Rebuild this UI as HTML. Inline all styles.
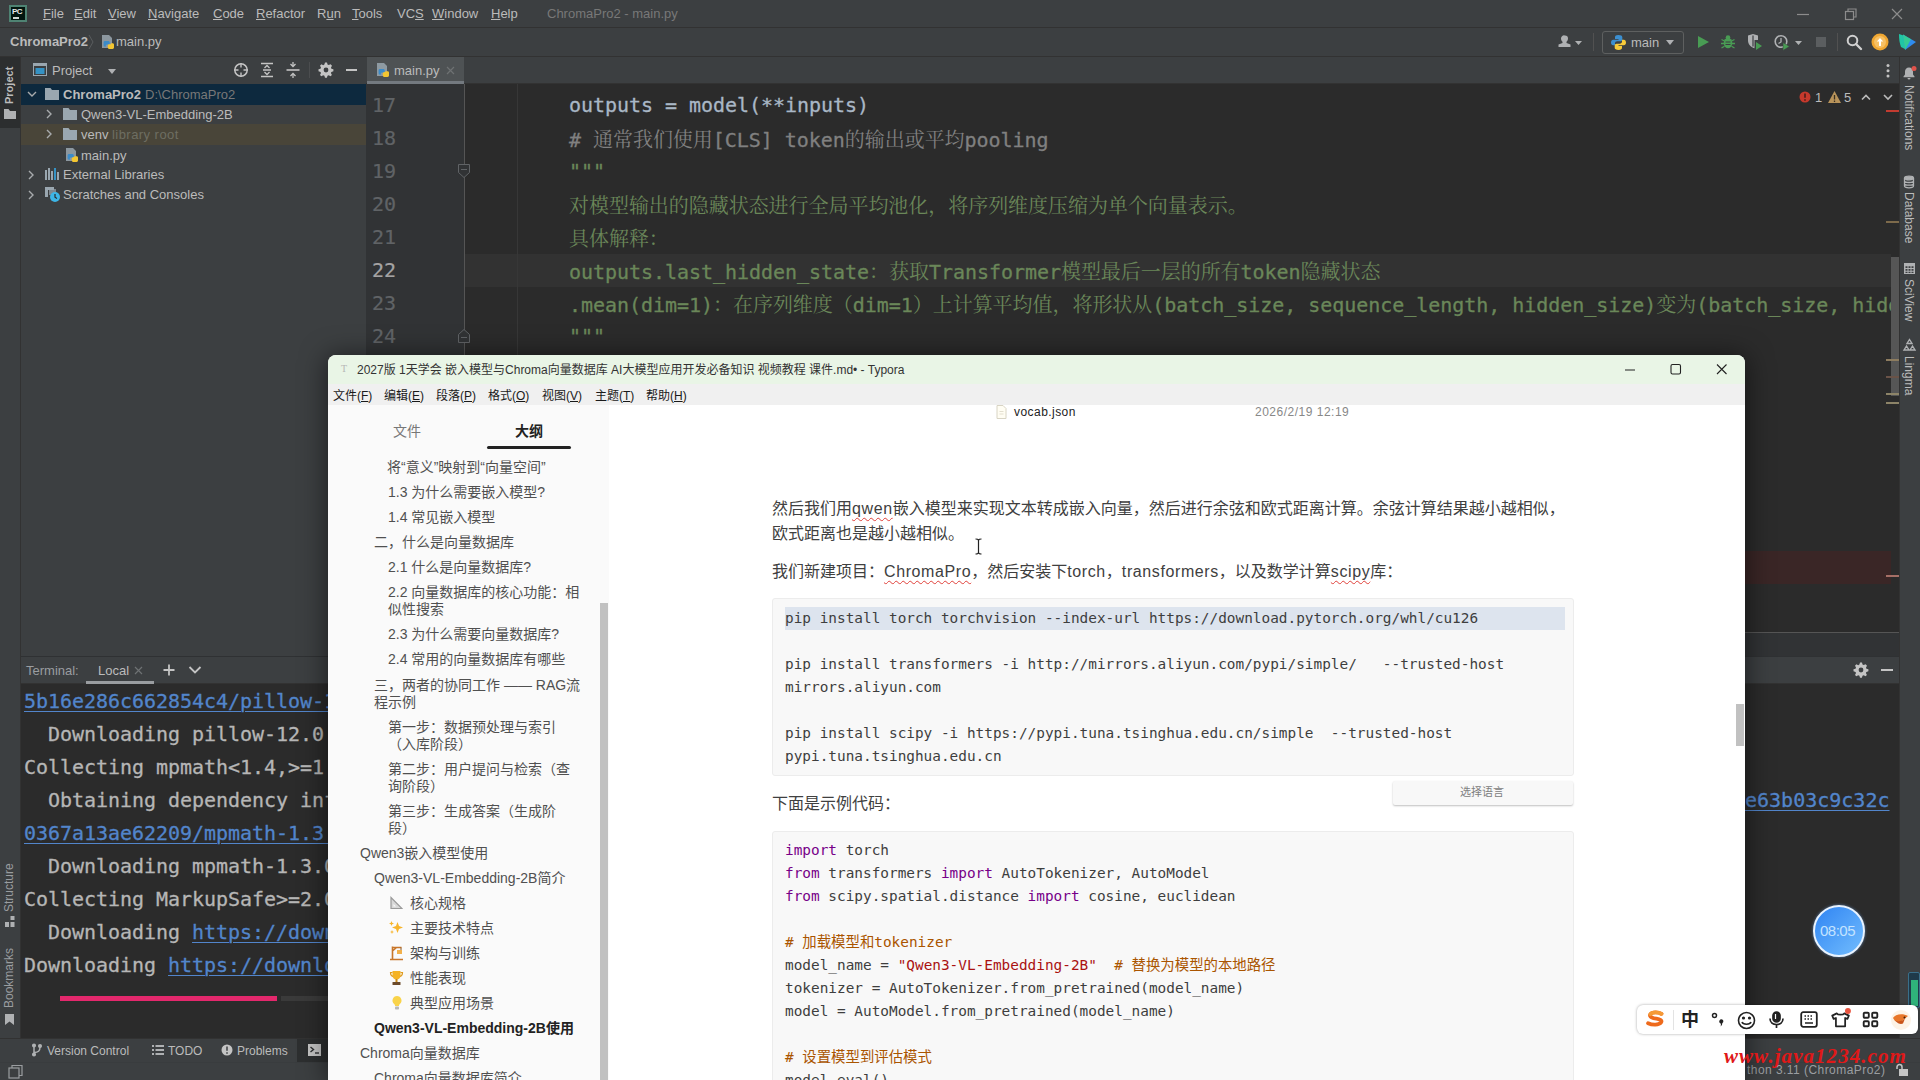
<!DOCTYPE html>
<html lang="zh-CN">
<head>
<meta charset="utf-8">
<title>ChromaPro2 - main.py</title>
<style>
*{box-sizing:border-box;margin:0;padding:0}
html,body{width:1920px;height:1080px;overflow:hidden;background:#2b2b2b}
body{position:relative;font-family:"Liberation Sans","Noto Sans CJK SC",sans-serif;font-size:13px;color:#bbbbbb}
.abs{position:absolute}
.t{position:absolute;white-space:nowrap;line-height:1}
.mono{font-family:"DejaVu Sans Mono","Liberation Mono","Noto Sans CJK SC",monospace}
/* ---------- IDE ---------- */
#menubar{left:0;top:0;width:1920px;height:28px;background:#3c3f41;border-bottom:1px solid #323232}
#navbar{left:0;top:28px;width:1920px;height:29px;background:#3c3f41;border-bottom:1px solid #323232}
.mi{top:7px;font-size:13px;color:#bbbbbb}
#menubar u{text-decoration-thickness:1px;text-underline-offset:1px}
#lstripe{left:0;top:57px;width:21px;height:1005px;background:#3c3f41;border-right:1px solid #323232}
#rstripe{left:1899px;top:57px;width:21px;height:1005px;background:#3c3f41;border-left:1px solid #323232}
#projhead{left:21px;top:57px;width:345px;height:27px;background:#3c3f41}
#proj{left:21px;top:84px;width:345px;height:573px;background:#3c3f41}
#tabbar{left:366px;top:57px;width:1533px;height:27px;background:#3c3f41;border-bottom:1px solid #323232}
#gutter{left:366px;top:84px;width:99px;height:548px;background:#313335;border-right:1px solid #555555}
#editor{left:465px;top:84px;width:1434px;height:548px;background:#2b2b2b}
.ln{-webkit-text-stroke:.2px currentColor;position:absolute;left:372px;font-size:20px;color:#606366;line-height:33px;height:33px}
.cl{letter-spacing:-.04px;-webkit-text-stroke:.3px currentColor;position:absolute;left:569px;font-size:20px;line-height:33px;height:33px;white-space:pre;color:#a9b7c6}
.cl .s{-webkit-text-stroke:0;font-family:"Noto Serif CJK SC","Noto Sans CJK SC",serif;font-size:20px}
.rs{left:1915px;font-size:12px;color:#bbbbbb;transform:rotate(90deg);transform-origin:0 0}
.g{color:#6a8759}
.cm{color:#808080}
/* bottom */
#splitbar{left:366px;top:632px;width:1533px;height:25px;background:#313335;border-top:1px solid #555555}
#termhead{left:21px;top:656px;width:1878px;height:28px;background:#3c3f41;border-top:1px solid #2f3133;border-bottom:1px solid #323232}
#term{left:21px;top:684px;width:1878px;height:354px;background:#2b2b2b}
.tl{letter-spacing:-.04px;-webkit-text-stroke:.3px currentColor;position:absolute;left:24px;font-size:20px;line-height:33px;height:33px;white-space:pre;color:#b6b6b6}
.lk{color:#5285cb;text-decoration:underline;text-decoration-thickness:1px;text-underline-offset:3px}
#botbar{left:0;top:1038px;width:1920px;height:24px;background:#3c3f41;border-top:1px solid #323232}
#status{left:0;top:1062px;width:1920px;height:18px;background:#3c3f41;border-top:1px solid #393c3e}
/* ---------- Typora ---------- */
#typ{left:328px;top:355px;width:1417px;height:725px;background:#ffffff;border-radius:8px 8px 0 0;overflow:hidden;color:#333;box-shadow:0 2px 26px 2px rgba(0,0,0,.5)}
#ttitle{left:0;top:0;width:1417px;height:29px;background:#e9f5e6}
#tmenu{left:0;top:29px;width:1417px;height:21px;background:#f0f0f0}
#tside{left:0;top:50px;width:281px;height:675px;background:#fafafa}
.tm{font-size:12px;color:#1a1a1a}
.ol{position:absolute;font-size:14px;line-height:17px;color:#505050;white-space:nowrap}
.p{position:absolute;left:444px;font-size:16px;line-height:25px;color:#404040;white-space:nowrap}
.cb{position:absolute;left:444px;width:802px;background:#f8f8f8;border:1px solid #ececec;border-radius:3px}
.cd{position:absolute;left:457px;font-size:14.4px;line-height:23px;height:23px;white-space:pre;color:#3e3e3e}
.la{letter-spacing:.6px}
.k{color:#770088}.c{color:#aa5500}.st{color:#aa1111}
</style>
</head>
<body>
<!-- IDE chrome -->
<div id="menubar" class="abs"></div>
<div id="navbar" class="abs"></div>
<div id="lstripe" class="abs"></div>
<div id="rstripe" class="abs"></div>
<div id="projhead" class="abs"></div>
<div id="proj" class="abs"></div>
<div id="tabbar" class="abs"></div>
<div id="gutter" class="abs"></div>
<div id="editor" class="abs"></div>
<div id="splitbar" class="abs"></div>
<div id="termhead" class="abs"></div>
<div id="term" class="abs"></div>
<div id="botbar" class="abs"></div>
<div id="status" class="abs"></div>

<!-- menu bar -->
<div class="abs" style="left:9px;top:5px;width:18px;height:17px;background:#02150f;border:2px solid #4f8373"><span class="t" style="left:1px;top:1px;font-size:8px;font-weight:bold;color:#e8e8e8;letter-spacing:-.5px">PC</span><span class="abs" style="left:2px;top:10px;width:6px;height:1.5px;background:#cfd8d4"></span></div>
<div id="menus" class="abs" style="left:0;top:0;width:1920px;height:28px">
<span class="t mi" style="left:43px"><u>F</u>ile</span>
<span class="t mi" style="left:74px"><u>E</u>dit</span>
<span class="t mi" style="left:108px"><u>V</u>iew</span>
<span class="t mi" style="left:148px"><u>N</u>avigate</span>
<span class="t mi" style="left:213px"><u>C</u>ode</span>
<span class="t mi" style="left:256px"><u>R</u>efactor</span>
<span class="t mi" style="left:317px">R<u>u</u>n</span>
<span class="t mi" style="left:352px"><u>T</u>ools</span>
<span class="t mi" style="left:397px">VC<u>S</u></span>
<span class="t mi" style="left:432px"><u>W</u>indow</span>
<span class="t mi" style="left:491px"><u>H</u>elp</span>
<span class="t mi" style="left:547px;color:#787878">ChromaPro2 - main.py</span>
</div>
<!-- window controls -->
<svg class="abs" style="left:1780px;top:0" width="140" height="28" viewBox="0 0 140 28" fill="none" stroke="#8c8c8c" stroke-width="1.2"><path d="M17 14.5h12"/><rect x="65.5" y="11.5" width="8" height="8"/><path d="M68 11.5v-2.5h8v8h-2.5"/><path d="M112 9l10 10M122 9l-10 10"/></svg>
<!-- nav bar -->
<span class="t" style="left:10px;top:35px;font-size:13px;font-weight:bold;color:#bbbbbb">ChromaPro2</span>
<svg class="abs" style="left:87px;top:34px" width="8" height="16" viewBox="0 0 8 16" fill="none" stroke="#5a5d5f" stroke-width="1"><path d="M2 1l4 7-4 7"/></svg>
<svg class="abs pyf" style="left:99px;top:34px" width="16" height="16" viewBox="0 0 16 16"><path d="M3 1h7l3 3v10H3z" fill="#9aa7b0" opacity=".85"/><path d="M7.2 7.5h3.2a1.4 1.4 0 0 1 1.4 1.4v1.6H8.6v.6h4.4" fill="none" stroke="#3e86c6" stroke-width="0"/><path d="M6 7h3.3c.8 0 1.4.6 1.4 1.4v2H8.2c-.8 0-1.4.6-1.4 1.4v.9H6c-.8 0-1.4-.6-1.4-1.4V8.400c0-.8.600-1.400 1.400-1.400z" fill="#3b8bc9"/><path d="M12 9.300h1.600c.8 0 1.400.6 1.400 1.400v2.900c0 .8-.6 1.400-1.400 1.400h-3.400c-.8 0-1.400-.6-1.400-1.400v-2c0-.8.600-1.400 1.400-1.400H12z" fill="#f4c631"/></svg>
<span class="t" style="left:116px;top:35px;font-size:13px;color:#bbbbbb">main.py</span>
<!-- right toolbar -->
<svg class="abs" style="left:1556px;top:33px" width="30" height="18" viewBox="0 0 30 18"><path d="M9 2.500a3 3 0 0 1 3 3c0 1.500-.8 2.600-1.500 3.200v1.300l4 1.500v2.500H2.500v-2.500l4-1.500v-1.300C5.800 8.100 5 7 5 5.500a3 3 0 0 1 4-3z" fill="#afb1b3"/><path d="M19 8h7l-3.500 4z" fill="#afb1b3"/></svg>
<div class="abs" style="left:1593px;top:33px;width:1px;height:18px;background:#515151"></div>
<div class="abs" style="left:1602px;top:31px;width:82px;height:23px;border:1px solid #5e6060;border-radius:3px"></div>
<svg class="abs" style="left:1610px;top:34px" width="17" height="17" viewBox="0 0 17 17"><path d="M8.300 1c-2.200 0-3.300.9-3.300 2.200V5h3.500v.7H3.200C1.900 5.700 1 6.800 1 8.500s.9 2.800 2.200 2.800H5V9.400c0-1.300 1-2.200 2.200-2.200h3.300c1 0 1.800-.8 1.800-1.800V3.200C12.300 1.900 11 1 8.300 1z" fill="#3c8fd0"/><path d="M8.700 16c2.200 0 3.300-.9 3.300-2.200V12H8.500v-.7h5.300c1.300 0 2.200-1.100 2.200-2.800s-.9-2.800-2.200-2.800H12v1.900c0 1.300-1 2.200-2.200 2.200H6.500c-1 0-1.800.8-1.800 1.800v2.200C4.700 15.100 6 16 8.700 16z" fill="#f7cb3a"/></svg>
<span class="t" style="left:1631px;top:36px;font-size:13px;color:#bbbbbb">main</span>
<svg class="abs" style="left:1665px;top:39px" width="10" height="7" viewBox="0 0 10 7"><path d="M1 1h8l-4 5z" fill="#afb1b3"/></svg>
<svg class="abs" style="left:1695px;top:33px" width="16" height="18" viewBox="0 0 16 18"><path d="M3 3l11 6-11 6z" fill="#499c54"/></svg>
<svg class="abs" style="left:1719px;top:33px" width="18" height="18" viewBox="0 0 18 18"><ellipse cx="9" cy="10" rx="4.300" ry="5.200" fill="#499c54"/><circle cx="9" cy="4.600" r="2.300" fill="#499c54"/><path d="M2.500 6.500l3 1.500M15.500 6.500l-3 1.500M2 10.500h3M16 10.500h-3M2.500 15l3-1.800M15.500 15l-3-1.800" stroke="#499c54" stroke-width="1.300" fill="none"/><path d="M6.500 9h5M6.500 11.500h5" stroke="#3c3f41" stroke-width="1"/></svg>
<svg class="abs" style="left:1745px;top:33px" width="18" height="18" viewBox="0 0 18 18"><path d="M3 2.500l5-1.500 5 1.500v4.500H9.500v8.300C5.500 14 3 11 3 7.500z" fill="#afb1b3"/><path d="M8 2.500v11" stroke="#3c3f41" stroke-width="1.200"/><path d="M11 9l6 4-6 4z" fill="#499c54"/></svg>
<svg class="abs" style="left:1772px;top:33px" width="34" height="18" viewBox="0 0 34 18"><circle cx="9" cy="8.500" r="5.800" fill="none" stroke="#afb1b3" stroke-width="1.600"/><path d="M9 5v4l-2.500 1.500" stroke="#afb1b3" stroke-width="1.300" fill="none"/><path d="M11 9.500l6.500 4-6.500 4z" fill="#499c54" stroke="#3c3f41" stroke-width=".6"/><path d="M23 8h7l-3.500 4z" fill="#afb1b3"/></svg>
<div class="abs" style="left:1816px;top:37px;width:10px;height:10px;background:#5b5e60"></div>
<div class="abs" style="left:1837px;top:33px;width:1px;height:18px;background:#515151"></div>
<svg class="abs" style="left:1845px;top:33px" width="18" height="18" viewBox="0 0 18 18" fill="none" stroke="#d0d0d0"><circle cx="7.500" cy="7.500" r="4.800" stroke-width="2"/><path d="M11 11l5 5" stroke-width="2.400" stroke-linecap="round"/></svg>
<svg class="abs" style="left:1871px;top:33px" width="18" height="18" viewBox="0 0 18 18"><circle cx="9" cy="9" r="8.500" fill="#f0a732"/><circle cx="9" cy="9" r="6" fill="#f7c063"/><path d="M9 5l3.200 3.500H10V13H8V8.500H5.800z" fill="#fff"/></svg>
<svg class="abs" style="left:1896px;top:32px" width="22" height="20" viewBox="0 0 22 20"><path d="M3 2l6 2v13l-4-2c-1.500-4-2-8-2-13z" fill="#20c6a5"/><path d="M7 2.500l13 7.500-11 8z" fill="#2f8cf0"/><path d="M7 2.500l8 4.700-6 10.800z" fill="#36d28b" opacity=".9"/></svg>


<!-- left stripe -->
<div class="abs" style="left:0;top:57px;width:20px;height:71px;background:#2c2e2f"></div>
<span class="t" style="left:4px;top:104px;font-size:11px;font-weight:bold;color:#bbbbbb;transform:rotate(-90deg);transform-origin:0 0">Project</span>
<svg class="abs" style="left:3px;top:108px" width="14" height="12" viewBox="0 0 14 12"><path d="M1 1h4.500l1.500 2h6v8H1z" fill="#afb1b3"/></svg>
<!-- project header -->
<svg class="abs" style="left:33px;top:63px" width="14" height="14" viewBox="0 0 14 14"><rect x=".5" y=".5" width="13" height="12" fill="#3c3f41" stroke="#9aa7b0"/><rect x="0" y="0" width="14" height="3" fill="#9aa7b0"/><rect x="2.500" y="5" width="9" height="6" fill="#3592c4"/></svg>
<span class="t" style="left:52px;top:64px;font-size:13px;color:#bbbbbb">Project</span>
<svg class="abs" style="left:107px;top:68px" width="10" height="7" viewBox="0 0 10 7"><path d="M1 1h8l-4 5z" fill="#afb1b3"/></svg>
<svg class="abs" style="left:233px;top:62px" width="16" height="16" viewBox="0 0 16 16" fill="none" stroke="#c4c4c4" stroke-width="1.500"><circle cx="8" cy="8" r="6.200"/><path d="M8 1v4.500M8 10.500V15M1 8h4.500M10.500 8H15" stroke-width="1.400"/></svg>
<svg class="abs" style="left:259px;top:62px" width="16" height="16" viewBox="0 0 16 16" fill="none" stroke="#c4c4c4" stroke-width="1.600"><path d="M2 1.500h12M2 14.500h12M4 8h8"/><path d="M5.500 6L8 3.500 10.500 6M5.500 10L8 12.500l2.500-2.500" stroke-width="1.300"/></svg>
<svg class="abs" style="left:285px;top:62px" width="16" height="16" viewBox="0 0 16 16" fill="none" stroke="#c4c4c4" stroke-width="1.600"><path d="M1.500 8h13"/><path d="M5.500 2L8 4.500 10.500 2M5.500 14L8 11.500l2.500 2.500" stroke-width="1.300"/><path d="M8 0v4M8 12v4" stroke-width="1.300"/></svg>
<div class="abs" style="left:309px;top:62px;width:1px;height:16px;background:#4b4d4f"></div>
<svg class="abs" style="left:318px;top:62px" width="16" height="16" viewBox="0 0 16 16"><path d="M8 1.200l1 .1.500 2 1.200.6 1.900-.9 1.400 1.500-1 1.800.4 1.200 2 .6v2l-2 .6-.5 1.200 1 1.800-1.400 1.400-1.800-1-1.200.5-.6 2H7l-.6-2-1.200-.5-1.800 1-1.400-1.400 1-1.800-.5-1.200-2-.6v-2l2-.6.500-1.200-1-1.800L3.400 3l1.800 1 1.200-.6.600-2z" fill="#c4c4c4" transform="translate(0,-.8)"/><circle cx="8" cy="8" r="2.400" fill="#3c3f41"/></svg>
<div class="abs" style="left:346px;top:69px;width:11px;height:2px;background:#c4c4c4"></div>
<!-- tree -->
<div class="abs" style="left:21px;top:84px;width:345px;height:21px;background:#0d293e"></div>
<div class="abs" style="left:21px;top:124px;width:345px;height:21px;background:#494539"></div>
<svg class="abs" style="left:27px;top:90px" width="10" height="8" viewBox="0 0 10 8" fill="none" stroke="#a8abad" stroke-width="1.400"><path d="M1 2l4 4 4-4"/></svg>
<svg class="abs" style="left:45px;top:88px" width="14" height="12" viewBox="0 0 14 12"><path d="M0 0h5.500l1.500 2h7v10H0z" fill="#9aa7b0"/></svg>
<span class="t" style="left:63px;top:88px;font-size:13px;font-weight:bold;color:#bbbbbb">ChromaPro2</span>
<span class="t" style="left:145px;top:88px;font-size:13px;color:#787878">D:\ChromaPro2</span>
<svg class="abs" style="left:45px;top:109px" width="8" height="10" viewBox="0 0 8 10" fill="none" stroke="#a8abad" stroke-width="1.400"><path d="M2 1l4 4-4 4"/></svg>
<svg class="abs" style="left:63px;top:108px" width="14" height="12" viewBox="0 0 14 12"><path d="M0 0h5.500l1.500 2h7v10H0z" fill="#9aa7b0"/></svg>
<span class="t" style="left:81px;top:108px;font-size:13px;color:#bbbbbb">Qwen3-VL-Embedding-2B</span>
<svg class="abs" style="left:45px;top:129px" width="8" height="10" viewBox="0 0 8 10" fill="none" stroke="#a8abad" stroke-width="1.400"><path d="M2 1l4 4-4 4"/></svg>
<svg class="abs" style="left:63px;top:128px" width="14" height="12" viewBox="0 0 14 12"><path d="M0 0h5.500l1.500 2h7v10H0z" fill="#9aa7b0"/></svg>
<span class="t" style="left:81px;top:128px;font-size:13px;color:#bbbbbb">venv</span>
<span class="t" style="left:112px;top:128px;font-size:13px;color:#6e6e62;letter-spacing:.45px">library root</span>
<svg class="abs" style="left:63px;top:147px" width="16" height="16" viewBox="0 0 16 16"><path d="M3 1h7l3 3v10H3z" fill="#9aa7b0" opacity=".85"/><path d="M6 7h3.300c.8 0 1.400.6 1.400 1.400v2H8.200c-.8 0-1.400.6-1.400 1.400v.9H6c-.8 0-1.400-.6-1.400-1.400V8.400C4.600 7.600 5.200 7 6 7z" fill="#3b8bc9"/><path d="M12 9.300h1.600c.8 0 1.400.6 1.400 1.400v2.900c0 .8-.6 1.400-1.400 1.400h-3.400c-.8 0-1.400-.6-1.400-1.400v-2c0-.8.600-1.400 1.400-1.400z" fill="#f4c631"/></svg>
<span class="t" style="left:81px;top:149px;font-size:13px;color:#bbbbbb">main.py</span>
<svg class="abs" style="left:27px;top:170px" width="8" height="10" viewBox="0 0 8 10" fill="none" stroke="#a8abad" stroke-width="1.400"><path d="M2 1l4 4-4 4"/></svg>
<svg class="abs" style="left:45px;top:168px" width="15" height="13" viewBox="0 0 15 13" fill="#9aa7b0"><rect x="0" y="2" width="2" height="10"/><rect x="3" y="0" width="2" height="12"/><rect x="6" y="3" width="2" height="9"/><rect x="9" y="0" width="2" height="12" fill="#3592c4"/><rect x="12" y="4" width="2" height="8"/></svg>
<span class="t" style="left:63px;top:168px;font-size:13px;color:#bbbbbb">External Libraries</span>
<svg class="abs" style="left:27px;top:190px" width="8" height="10" viewBox="0 0 8 10" fill="none" stroke="#a8abad" stroke-width="1.400"><path d="M2 1l4 4-4 4"/></svg>
<svg class="abs" style="left:44px;top:186px" width="17" height="17" viewBox="0 0 17 17"><path d="M1 1h9v3H4v7H1z" fill="#9aa7b0"/><rect x="5" y="3" width="7" height="6" fill="#9aa7b0" opacity=".7"/><circle cx="11" cy="11" r="5" fill="#3db5e6"/><path d="M11 8v3.200l2 1.200" stroke="#2b2b2b" stroke-width="1.200" fill="none"/></svg>
<span class="t" style="left:63px;top:188px;font-size:13px;color:#bbbbbb">Scratches and Consoles</span>
<!-- editor tab -->
<div class="abs" style="left:367px;top:57px;width:97px;height:27px;background:#4e5254;border-bottom:3px solid #747a80"></div>
<svg class="abs" style="left:374px;top:62px" width="16" height="16" viewBox="0 0 16 16"><path d="M3 1h7l3 3v10H3z" fill="#9aa7b0" opacity=".85"/><path d="M6 7h3.300c.8 0 1.400.6 1.400 1.400v2H8.200c-.8 0-1.400.6-1.400 1.400v.9H6c-.8 0-1.400-.6-1.400-1.400V8.400C4.600 7.600 5.200 7 6 7z" fill="#3b8bc9"/><path d="M12 9.300h1.600c.8 0 1.400.6 1.400 1.400v2.900c0 .8-.6 1.400-1.400 1.400h-3.400c-.8 0-1.400-.6-1.400-1.400v-2c0-.8.600-1.400 1.400-1.400z" fill="#f4c631"/></svg>
<span class="t" style="left:394px;top:64px;font-size:13px;color:#bbbbbb">main.py</span>
<svg class="abs" style="left:446px;top:66px" width="9" height="9" viewBox="0 0 9 9" stroke="#6e7173" stroke-width="1.200"><path d="M1 1l7 7M8 1l-7 7"/></svg>
<svg class="abs" style="left:1885px;top:63px" width="6" height="16" viewBox="0 0 6 16" fill="#c4c4c4"><circle cx="3" cy="2.500" r="1.500"/><circle cx="3" cy="7.700" r="1.500"/><circle cx="3" cy="13" r="1.500"/></svg>

<!-- editor -->
<div class="abs" style="left:465px;top:254px;width:1426px;height:33px;background:#323232"></div>
<div class="abs" style="left:465px;top:551px;width:1426px;height:33px;background:#3a2626"></div>
<div class="abs" style="left:517px;top:84px;width:1px;height:548px;background:#373737"></div>
<div id="edclip" class="abs" style="left:465px;top:84px;width:1426px;height:548px;overflow:hidden">
<div class="cl mono" style="left:104px;top:4.5px">outputs = model(**inputs)</div>
<div class="cl mono" style="left:104px;top:37.5px"><span class="cm"># <span class="s">通常我们使用</span>[CLS] token<span class="s">的输出或平均</span>pooling</span></div>
<div class="cl mono" style="left:104px;top:70.5px"><span class="g">"""</span></div>
<div class="cl mono" style="left:104px;top:103.5px"><span class="g"><span class="s">对模型输出的隐藏状态进行全局平均池化，将序列维度压缩为单个向量表示。</span></span></div>
<div class="cl mono" style="left:104px;top:136.5px"><span class="g"><span class="s">具体解释：</span></span></div>
<div class="cl mono" style="left:104px;top:169.5px"><span class="g">outputs.last_hidden_state<span class="s">：获取</span>Transformer<span class="s">模型最后一层的所有</span>token<span class="s">隐藏状态</span></span></div>
<div class="cl mono" style="left:104px;top:202.5px"><span class="g">.mean(dim=1)<span class="s">：在序列维度（</span>dim=1<span class="s">）上计算平均值，将形状从</span>(batch_size, sequence_length, hidden_size)<span class="s">变为</span>(batch_size, hidden_size)</span></div>
<div class="cl mono" style="left:104px;top:235.5px"><span class="g">"""</span></div>
</div>
<div class="ln mono" style="top:88.5px">17</div>
<div class="ln mono" style="top:121.5px">18</div>
<div class="ln mono" style="top:154.5px">19</div>
<div class="ln mono" style="top:187.5px">20</div>
<div class="ln mono" style="top:220.5px">21</div>
<div class="ln mono" style="top:253.5px;color:#a4a3a3">22</div>
<div class="ln mono" style="top:286.5px">23</div>
<div class="ln mono" style="top:319.5px">24</div>
<svg class="abs" style="left:457px;top:163px" width="14" height="16" viewBox="0 0 14 16"><path d="M1.500 1.500h11v8l-5.500 5-5.500-5z" fill="#313335" stroke="#606366" stroke-width="1"/><path d="M4 6.500h6" stroke="#606366"/></svg>
<svg class="abs" style="left:457px;top:328px" width="14" height="16" viewBox="0 0 14 16"><path d="M1.500 14.500h11v-8l-5.500-5-5.500 5z" fill="#313335" stroke="#606366" stroke-width="1"/><path d="M4 9.500h6" stroke="#606366"/></svg>
<svg class="abs" style="left:1798px;top:90px" width="14" height="14" viewBox="0 0 14 14"><circle cx="7" cy="7" r="5.500" fill="#c7392c"/><path d="M7 3.500v4.300M7 9.300v1.400" stroke="#3a1a18" stroke-width="1.400"/></svg>
<span class="t" style="left:1815px;top:91px;font-size:13px;color:#bbbbbb">1</span>
<svg class="abs" style="left:1827px;top:90px" width="15" height="14" viewBox="0 0 15 14"><path d="M7.500 1l6.500 12H1z" fill="#b8935a"/><path d="M7.500 5v4.500M7.500 10.600v1.400" stroke="#3a3020" stroke-width="1.300"/></svg>
<span class="t" style="left:1844px;top:91px;font-size:13px;color:#bbbbbb">5</span>
<svg class="abs" style="left:1860px;top:92px" width="12" height="10" viewBox="0 0 12 10" fill="none" stroke="#bbbbbb" stroke-width="1.600"><path d="M2 7.500l4-4 4 4"/></svg>
<svg class="abs" style="left:1882px;top:92px" width="12" height="10" viewBox="0 0 12 10" fill="none" stroke="#bbbbbb" stroke-width="1.600"><path d="M2 3l4 4 4-4"/></svg>
<!-- scrollbar + stripe marks -->
<div class="abs" style="left:1891px;top:257px;width:8px;height:139px;background:#565656"></div>
<div class="abs" style="left:1886px;top:110px;width:13px;height:2px;background:#c23b30"></div>
<div class="abs" style="left:1886px;top:221px;width:13px;height:2px;background:#7d6a4b"></div>
<div class="abs" style="left:1886px;top:359px;width:13px;height:2px;background:#8d7c5f"></div>
<div class="abs" style="left:1886px;top:376px;width:13px;height:2px;background:#6a5348"></div>
<div class="abs" style="left:1886px;top:393px;width:13px;height:2px;background:#8d8468"></div>
<div class="abs" style="left:1886px;top:402px;width:13px;height:2px;background:#8d8468"></div>
<div class="abs" style="left:1886px;top:575px;width:13px;height:2px;background:#a56f66"></div>
<!-- right stripe -->
<svg class="abs" style="left:1902px;top:65px" width="16" height="16" viewBox="0 0 16 16"><path d="M7 2.500c2.500 0 4 1.800 4 4v3l1.500 2v.8H1.500v-.8l1.500-2v-3c0-2.200 1.500-4 4-4z" fill="#afb1b3"/><path d="M5.500 13h3a1.500 1.500 0 0 1-3 0z" fill="#afb1b3"/><circle cx="12" cy="3.500" r="2.500" fill="#e0524a"/></svg>
<span class="t rs" style="top:85px">Notifications</span>
<svg class="abs" style="left:1902px;top:175px" width="14" height="14" viewBox="0 0 14 14" fill="none" stroke="#afb1b3" stroke-width="1.300"><ellipse cx="7" cy="3" rx="4.500" ry="1.800" fill="#afb1b3"/><path d="M2.500 3v8c0 1 2 1.800 4.500 1.800s4.500-.8 4.500-1.800V3M2.500 5.700c0 1 2 1.800 4.500 1.800s4.500-.8 4.500-1.800M2.500 8.400c0 1 2 1.800 4.500 1.800s4.500-.8 4.500-1.800"/></svg>
<span class="t rs" style="top:192px">Database</span>
<svg class="abs" style="left:1903px;top:262px" width="13" height="13" viewBox="0 0 13 13" fill="#afb1b3"><path d="M1 1h11v11H1zM2.500 4.200v1.800h2V4.200zM5.500 4.200v1.800h2V4.200zM8.500 4.200v1.800h2V4.200zM2.500 7v1.800h2V7zM5.500 7v1.800h2V7zM8.500 7v1.800h2V7zM2.500 9.700v1.300h2V9.700zM5.500 9.700v1.300h2V9.700zM8.500 9.700v1.300h2V9.700z" fill-rule="evenodd"/></svg>
<span class="t rs" style="top:279px">SciView</span>
<svg class="abs" style="left:1902px;top:338px" width="15" height="15" viewBox="0 0 15 15" fill="none" stroke="#afb1b3" stroke-width="1.400"><path d="M7.500 1.500l2.500 4-5 0zM2 12l2.500-4 2.500 4zM8 12l2.500-4 2.500 4z"/></svg>
<span class="t rs" style="top:356px">Lingma</span>

<!-- terminal -->
<span class="t" style="left:26px;top:664px;font-size:13px;color:#9a9da0">Terminal:</span>
<span class="t" style="left:98px;top:664px;font-size:13px;color:#bbbbbb">Local</span>
<svg class="abs" style="left:134px;top:666px" width="9" height="9" viewBox="0 0 9 9" stroke="#6e7173" stroke-width="1.200"><path d="M1 1l7 7M8 1l-7 7"/></svg>
<div class="abs" style="left:86px;top:681px;width:68px;height:3px;background:#9a9da0"></div>
<svg class="abs" style="left:162px;top:663px" width="14" height="14" viewBox="0 0 14 14" stroke="#c4c4c4" stroke-width="1.800"><path d="M7 1.500v11M1.500 7h11"/></svg>
<svg class="abs" style="left:188px;top:665px" width="14" height="10" viewBox="0 0 14 10" fill="none" stroke="#c4c4c4" stroke-width="1.800"><path d="M1.500 2l5.500 5.500L12.500 2"/></svg>
<svg class="abs" style="left:1853px;top:662px" width="16" height="16" viewBox="0 0 16 16"><path d="M8 1.200l1 .1.500 2 1.200.6 1.900-.9 1.400 1.500-1 1.800.4 1.200 2 .6v2l-2 .6-.5 1.200 1 1.800-1.400 1.400-1.800-1-1.200.5-.6 2H7l-.6-2-1.200-.5-1.800 1-1.400-1.400 1-1.800-.5-1.200-2-.6v-2l2-.6.500-1.200-1-1.800L3.400 3l1.800 1 1.200-.6.600-2z" fill="#c4c4c4" transform="translate(0,-.8)"/><circle cx="8" cy="8" r="2.400" fill="#3c3f41"/></svg>
<div class="abs" style="left:1881px;top:669px;width:12px;height:2px;background:#c4c4c4"></div>
<div class="abs" style="left:21px;top:684px;width:1878px;height:354px;overflow:hidden">
<div class="tl mono" style="left:3px;top:0.5px"><span class="lk">5b16e286c662854c4/pillow-12.0.0-cp311-cp311-win_amd64.whl</span></div>
<div class="tl mono" style="left:3px;top:33.5px">  Downloading pillow-12.0.0-cp311-cp311-win_amd64.whl (7.0 MB)</div>
<div class="tl mono" style="left:3px;top:66.5px">Collecting mpmath&lt;1.4,&gt;=1.1.0 (from sympy-&gt;torch)</div>
<div class="tl mono" style="left:3px;top:99.5px">  Obtaining dependency information for mpmath&lt;1.4,&gt;=1.1.0</div>
<div class="tl mono" style="left:3px;top:132.5px"><span class="lk">0367a13ae62209/mpmath-1.3.0-py3-none-any.whl.metadata</span></div>
<div class="tl mono" style="left:3px;top:165.5px">  Downloading mpmath-1.3.0-py3-none-any.whl.metadata (8.6 kB)</div>
<div class="tl mono" style="left:3px;top:198.5px">Collecting MarkupSafe&gt;=2.0 (from jinja2-&gt;torch)</div>
<div class="tl mono" style="left:3px;top:231.5px">  Downloading <span class="lk">https://download.pytorch.org/whl/MarkupSafe-2.1.5</span></div>
<div class="tl mono" style="left:3px;top:264.5px">Downloading <span class="lk">https://download.pytorch.org/whl/cu126/torch-2.9.1</span></div>
</div>
<div class="abs" style="left:60px;top:996px;width:217px;height:5px;background:#e3286c"></div>
<div class="abs" style="left:281px;top:996px;width:260px;height:5px;background:#3a3a3a"></div>
<span class="t mono lk" style="left:1745px;top:789px;font-size:20px;line-height:22px;-webkit-text-stroke:.3px currentColor">e63b03c9c32c</span>
<span class="t" style="left:3px;top:912px;font-size:12px;color:#9a9da0;transform:rotate(-90deg);transform-origin:0 0">Structure</span>
<svg class="abs" style="left:4px;top:916px" width="12" height="12" viewBox="0 0 12 12" fill="#afb1b3"><rect x="1" y="6" width="4" height="5"/><rect x="6.500" y="6" width="4" height="5"/><rect x="6.500" y="0" width="4" height="4"/></svg>
<span class="t" style="left:3px;top:1008px;font-size:12px;color:#9a9da0;transform:rotate(-90deg);transform-origin:0 0">Bookmarks</span>
<svg class="abs" style="left:4px;top:1013px" width="11" height="13" viewBox="0 0 11 13"><path d="M1 1h9v11l-4.500-3.500L1 12z" fill="#afb1b3"/></svg>
<!-- bottom tool bar -->
<svg class="abs" style="left:31px;top:1043px" width="12" height="14" viewBox="0 0 12 14" fill="none" stroke="#afb1b3" stroke-width="1.500"><path d="M3 1.500v11M3 9.500c5 0 6-2 6-5.500"/><circle cx="3" cy="2.500" r="1.300" fill="#afb1b3"/><circle cx="9" cy="3" r="1.300" fill="#afb1b3"/><circle cx="3" cy="11.500" r="1.300" fill="#afb1b3"/></svg>
<span class="t" style="left:47px;top:1045px;font-size:12px;color:#bbbbbb">Version Control</span>
<svg class="abs" style="left:152px;top:1045px" width="12" height="10" viewBox="0 0 12 10" fill="#afb1b3"><rect x="0" y="0" width="2" height="2"/><rect x="3.500" y="0" width="8.500" height="2"/><rect x="0" y="4" width="2" height="2"/><rect x="3.500" y="4" width="8.500" height="2"/><rect x="0" y="8" width="2" height="2"/><rect x="3.500" y="8" width="8.500" height="2"/></svg>
<span class="t" style="left:168px;top:1045px;font-size:12px;color:#bbbbbb">TODO</span>
<svg class="abs" style="left:221px;top:1044px" width="12" height="12" viewBox="0 0 12 12"><circle cx="6" cy="6" r="5.500" fill="#c4c4c4"/><path d="M6 2.500v4.300M6 8.200v1.500" stroke="#3c3f41" stroke-width="1.500"/></svg>
<span class="t" style="left:237px;top:1045px;font-size:12px;color:#bbbbbb">Problems</span>
<div class="abs" style="left:297px;top:1039px;width:80px;height:23px;background:#2d2f30"></div>
<svg class="abs" style="left:308px;top:1044px" width="13" height="12" viewBox="0 0 13 12"><rect x="0" y="0" width="13" height="12" fill="#c4c4c4"/><path d="M2.500 3l3 2.500-3 2.500" stroke="#2d2f30" stroke-width="1.400" fill="none"/><path d="M7 9h4" stroke="#2d2f30" stroke-width="1.400"/></svg>
<svg class="abs" style="left:8px;top:1064px" width="15" height="15" viewBox="0 0 15 15" fill="none" stroke="#9a9da0" stroke-width="1.200"><rect x="1" y="4" width="10" height="10"/><path d="M4 4V1.500h10v10h-3"/></svg>
<span class="t" style="left:1747px;top:1064px;font-size:12px;color:#9a9da0;letter-spacing:.45px">thon 3.11 (ChromaPro2)</span>
<svg class="abs" style="left:1895px;top:1063px" width="14" height="14" viewBox="0 0 14 14"><rect x="4" y="6" width="9" height="7" fill="#c4c4c4"/><path d="M2 6V4a2.500 2.500 0 0 1 5 0v2" fill="none" stroke="#c4c4c4" stroke-width="1.500"/></svg>

<!--IDE-CONTENT-->
<!-- Typora window -->
<div id="typ" class="abs">
<div id="ttitle" class="abs"></div>
<div id="tmenu" class="abs"></div>
<div id="tside" class="abs"></div>
<span class="t" style="left:13px;top:9px;font-size:10px;color:#b5b5b5;font-family:'Liberation Serif',serif">T</span>
<span class="t" style="left:29px;top:9px;font-size:12px;color:#333">2027版 1天学会 嵌入模型与Chroma向量数据库 AI大模型应用开发必备知识 视频教程 课件.md• - Typora</span>
<svg class="abs" style="left:1282px;top:0px" width="130" height="29" viewBox="0 0 130 29" fill="none" stroke="#222" stroke-width="1.100"><path d="M15 15h10"/><rect x="61" y="9.500" width="9.500" height="9.500" rx="1.500"/><path d="M107 9.500l9.500 9.500M116.500 9.500l-9.500 9.500"/></svg>
<span class="t tm" style="left:5px;top:35px">文件(<u>F</u>)</span>
<span class="t tm" style="left:56px;top:35px">编辑(<u>E</u>)</span>
<span class="t tm" style="left:108px;top:35px">段落(<u>P</u>)</span>
<span class="t tm" style="left:160px;top:35px">格式(<u>O</u>)</span>
<span class="t tm" style="left:214px;top:35px">视图(<u>V</u>)</span>
<span class="t tm" style="left:267px;top:35px">主题(<u>T</u>)</span>
<span class="t tm" style="left:318px;top:35px">帮助(<u>H</u>)</span>
<span class="t" style="left:65px;top:69px;font-size:14px;color:#777">文件</span>
<span class="t" style="left:187px;top:69px;font-size:14px;color:#222;font-weight:bold">大纲</span>
<div class="abs" style="left:159px;top:91px;width:84px;height:3px;background:#222;border-radius:1.500px"></div>
<div class="ol" style="left:59px;top:103.5px">将“意义”映射到“向量空间”</div>
<div class="ol" style="left:60px;top:128.5px">1.3 为什么需要嵌入模型?</div>
<div class="ol" style="left:60px;top:153.5px">1.4 常见嵌入模型</div>
<div class="ol" style="left:46px;top:178.5px">二，什么是向量数据库</div>
<div class="ol" style="left:60px;top:203.5px">2.1 什么是向量数据库?</div>
<div class="ol" style="left:60px;top:228.5px">2.2 向量数据库的核心功能：相<br>似性搜索</div>
<div class="ol" style="left:60px;top:270.5px">2.3 为什么需要向量数据库?</div>
<div class="ol" style="left:60px;top:295.5px">2.4 常用的向量数据库有哪些</div>
<div class="ol" style="left:46px;top:321.5px">三，两者的协同工作 —— RAG流<br>程示例</div>
<div class="ol" style="left:60px;top:363.5px">第一步：数据预处理与索引<br>（入库阶段）</div>
<div class="ol" style="left:60px;top:405.5px">第二步：用户提问与检索（查<br>询阶段）</div>
<div class="ol" style="left:60px;top:447.5px">第三步：生成答案（生成阶<br>段）</div>
<div class="ol" style="left:32px;top:489.5px">Qwen3嵌入模型使用</div>
<div class="ol" style="left:46px;top:514.5px">Qwen3-VL-Embedding-2B简介</div>
<div class="ol" style="left:82px;top:539.5px">核心规格</div>
<div class="ol" style="left:82px;top:564.5px">主要技术特点</div>
<div class="ol" style="left:82px;top:589.5px">架构与训练</div>
<div class="ol" style="left:82px;top:614.5px">性能表现</div>
<div class="ol" style="left:82px;top:639.5px">典型应用场景</div>
<div class="ol" style="left:46px;top:664.5px"><b style="color:#222">Qwen3-VL-Embedding-2B使用</b></div>
<div class="ol" style="left:32px;top:689.5px">Chroma向量数据库</div>
<div class="ol" style="left:46px;top:714.5px">Chroma向量数据库简介</div>
<svg class="abs" style="left:61px;top:541px" width="14" height="14" viewBox="0 0 14 14"><path d="M2 1.500v11h11z" fill="#d8d8d8" stroke="#9a9a9a" stroke-width="1.200"/><path d="M4.500 8v2.500H7z" fill="#fafafa"/></svg>
<svg class="abs" style="left:60px;top:565px" width="16" height="16" viewBox="0 0 16 16" fill="#f7b52c"><path d="M9.500 2l1.500 4 4 1.500-4 1.500-1.500 4-1.500-4-4-1.500 4-1.500z"/><path d="M3.500 1l.7 1.800L6 3.500l-1.800.7L3.500 6l-.7-1.800L1 3.500l1.800-.7zM4 10l.6 1.400L6 12l-1.400.6L4 14l-.6-1.400L2 12l1.400-.6z"/></svg>
<svg class="abs" style="left:61px;top:590px" width="15" height="16" viewBox="0 0 15 16"><path d="M1 14.500h13M3.500 14V1.500M3.500 2.500h9M3.500 6l4-3.500" stroke="#c8762a" stroke-width="1.600" fill="none"/><rect x="8" y="5" width="5" height="4" fill="#f2b04a"/><path d="M12 2.500V5" stroke="#8a5a2a" stroke-width="1"/></svg>
<svg class="abs" style="left:61px;top:615px" width="15" height="16" viewBox="0 0 15 16"><path d="M3.500 1h8v4.500c0 2.500-1.800 4-4 4s-4-1.500-4-4z" fill="#f5b324"/><path d="M3.500 2.500H1.500c0 2.500 1 3.500 2.500 3.800M11.500 2.500h2c0 2.500-1 3.500-2.500 3.800" stroke="#e09b1e" stroke-width="1.200" fill="none"/><rect x="6.500" y="9" width="2" height="3" fill="#c98a1a"/><rect x="3.500" y="12" width="8" height="3" rx=".5" fill="#6b4a2a"/></svg>
<svg class="abs" style="left:63px;top:640px" width="12" height="16" viewBox="0 0 12 16"><path d="M6 1a4.500 4.500 0 0 1 2.800 8c-.5.500-.8 1-.8 2H4c0-1-.3-1.500-.8-2A4.500 4.500 0 0 1 6 1z" fill="#f9d34a"/><rect x="4" y="11.500" width="4" height="3" rx=".8" fill="#b9b9b9"/></svg>
<div class="abs" style="left:272px;top:248px;width:8px;height:480px;background:#c1c1c1"></div>
<svg class="abs" style="left:668px;top:50px" width="11" height="14" viewBox="0 0 11 14"><path d="M1 .5h6l3 3v10H1z" fill="#fffdf3" stroke="#d8d4c4" stroke-width="1"/><path d="M3.500 6.500h4M3.500 9h4" stroke="#e3dfcf" stroke-width="1"/></svg>
<span class="t" style="left:686px;top:51px;font-size:12px;color:#222;letter-spacing:.45px">vocab.json</span>
<span class="t" style="left:927px;top:51px;font-size:12px;color:#888;letter-spacing:.5px">2026/2/19 12:19</span>
<div class="p" style="top:140.5px">然后我们用<span class="la" style="text-decoration:underline wavy #e0403a;text-decoration-thickness:1px;text-underline-offset:3px;text-decoration-skip-ink:none">qwen</span>嵌入模型来实现文本转成嵌入向量，然后进行余弦和欧式距离计算。余弦计算结果越小越相似，</div>
<div class="p" style="top:165.5px">欧式距离也是越小越相似。</div>
<div class="p" style="top:203.5px">我们新建项目：<span class="la" style="text-decoration:underline wavy #e0403a;text-decoration-thickness:1px;text-underline-offset:3px;text-decoration-skip-ink:none">ChromaPro</span>，然后安装下<span class="la">torch</span>，<span class="la">transformers</span>，以及数学计算<span class="la" style="text-decoration:underline wavy #e0403a;text-decoration-thickness:1px;text-underline-offset:3px;text-decoration-skip-ink:none">scipy</span>库：</div>
<svg class="abs" style="left:646px;top:183px" width="9" height="17" viewBox="0 0 9 17" fill="none" stroke="#222" stroke-width="1.200"><path d="M1.500 1c1.500 0 3 .3 3 1.500v12c0 1.200-1.500 1.500-3 1.500M7.500 1c-1.500 0-3 .3-3 1.500M7.500 16c-1.500 0-3-.3-3-1.500"/></svg>
<div class="cb" style="top:243px;height:178px"></div>
<div class="abs" style="left:457px;top:252px;width:780px;height:23px;background:#dde4ee"></div>
<div class="cd mono" style="top:251.5px">pip install torch torchvision --index-url https://download.pytorch.org/whl/cu126</div>
<div class="cd mono" style="top:297.5px">pip install transformers -i http://mirrors.aliyun.com/pypi/simple/   --trusted-host</div>
<div class="cd mono" style="top:320.5px">mirrors.aliyun.com</div>
<div class="cd mono" style="top:366.5px">pip install scipy -i https://pypi.tuna.tsinghua.edu.cn/simple  --trusted-host</div>
<div class="cd mono" style="top:389.5px">pypi.tuna.tsinghua.edu.cn</div>
<div class="abs" style="left:1065px;top:426px;width:180px;height:24px;background:#f8f8f8;box-shadow:0 1px 2px rgba(0,0,0,.25);border-radius:2px"></div>
<span class="t" style="left:1132px;top:432px;font-size:11px;color:#808080">选择语言</span>
<div class="p" style="top:435.5px">下面是示例代码：</div>
<div class="cb" style="top:476px;height:260px"></div>
<div class="cd mono" style="top:483.5px"><span class="k">import</span> torch</div>
<div class="cd mono" style="top:506.5px"><span class="k">from</span> transformers <span class="k">import</span> AutoTokenizer, AutoModel</div>
<div class="cd mono" style="top:529.5px"><span class="k">from</span> scipy.spatial.distance <span class="k">import</span> cosine, euclidean</div>
<div class="cd mono" style="top:575.5px"><span class="c"># 加载模型和tokenizer</span></div>
<div class="cd mono" style="top:598.5px">model_name = <span class="st">"Qwen3-VL-Embedding-2B"</span>  <span class="c"># 替换为模型的本地路径</span></div>
<div class="cd mono" style="top:621.5px">tokenizer = AutoTokenizer.from_pretrained(model_name)</div>
<div class="cd mono" style="top:644.5px">model = AutoModel.from_pretrained(model_name)</div>
<div class="cd mono" style="top:690.5px"><span class="c"># 设置模型到评估模式</span></div>
<div class="cd mono" style="top:713.5px">model.eval()</div>
<div class="abs" style="left:1408px;top:349px;width:8px;height:42px;background:#c1c1c1"></div>
<!--TYP-CONTENT-->
</div>
<div class="abs" style="left:1813px;top:905px;width:52px;height:52px;border-radius:50%;background:linear-gradient(135deg,#368af4 10%,#6fbafd 95%);border:2px solid #e8f3ff;box-shadow:0 0 3px rgba(120,180,255,.6)"></div>
<span class="t" style="left:1820px;top:923px;font-size:15px;color:#c4e3ff;letter-spacing:-.5px">08:05</span>
<!-- green level meter -->
<div class="abs" style="left:1908px;top:972px;width:12px;height:36px;background:#1f3a4a;border:1px solid #3a6f8a;border-radius:2px"></div>
<div class="abs" style="left:1911px;top:980px;width:7px;height:26px;background:#2fb27a"></div>
<!-- IME toolbar -->
<div class="abs" style="left:1637px;top:1005px;width:281px;height:29px;background:#ffffff;border-radius:6px;box-shadow:0 0 3px rgba(0,0,0,.35)"></div>
<svg class="abs" style="left:1644px;top:1009px" width="22" height="21" viewBox="0 0 24 24" fill="none" preserveAspectRatio="none"><path d="M19 5.500c-3-2-10-2.500-12 .5-1.800 3 3 4.500 6.500 5 4 .6 6.500 2 5 4.500-2 3-9.500 3-14 .8" stroke="#ee6a1c" stroke-width="4.300" stroke-linecap="round"/><path d="M19 5.500c-3-2-10-2.500-12 .5" stroke="#f59a36" stroke-width="4.300" stroke-linecap="round"/></svg>
<div class="abs" style="left:1673px;top:1010px;width:1px;height:20px;background:#e3e3e3"></div>
<span class="t" style="left:1681px;top:1011px;font-size:18px;font-weight:bold;color:#222">中</span>
<svg class="abs" style="left:1710px;top:1011px" width="16" height="18" viewBox="0 0 16 18"><circle cx="4.500" cy="4.500" r="2" fill="none" stroke="#222" stroke-width="1.500"/><path d="M9.500 9.500a2 2 0 1 1 2.800 2.500c0 1.500-.5 2.500-1.800 3.500.5-1.200.5-2 .2-3a2 2 0 0 1-1.200-3z" fill="#222"/></svg>
<svg class="abs" style="left:1736px;top:1010px" width="21" height="21" viewBox="0 0 21 21" fill="none" stroke="#222" stroke-width="1.600"><circle cx="10.500" cy="10.500" r="8"/><path d="M6 12c1 3 8 3 9 0" /><circle cx="7.500" cy="8" r=".8" fill="#222"/><circle cx="13.500" cy="8" r=".8" fill="#222"/></svg>
<svg class="abs" style="left:1768px;top:1011px" width="17" height="18" viewBox="0 0 17 18" fill="none" stroke="#222" stroke-width="1.700"><rect x="5" y="1" width="7" height="10" rx="3.500" fill="#222"/><path d="M2 7.500c0 4 3 6 6.500 6s6.500-2 6.500-6M8.500 13.500v3.500"/><path d="M7.500 3v5" stroke="#fff" stroke-width="1.200"/></svg>
<svg class="abs" style="left:1800px;top:1011px" width="18" height="17" viewBox="0 0 18 17" fill="none" stroke="#222" stroke-width="1.800"><rect x="1.200" y="1.200" width="15.600" height="14.600" rx="2"/><path d="M4.500 5h1.500M7.500 5h1.500M10.500 5h1.500M4.500 8h1.500M7.500 8h1.500M10.500 8h1.500M5 12h8" stroke-width="1.500"/></svg>
<svg class="abs" style="left:1829px;top:1006px" width="24" height="23" viewBox="0 0 26 24" fill="none" stroke="#222" stroke-width="1.900"><path d="M8.500 7.500l-5 2.500 1.500 3.500 2.500-1v9h10v-9l2.500 1 1.500-3.500-5-2.500c-1 2-7 2-8 0z" stroke-linejoin="round"/><circle cx="20.500" cy="5" r="3.200" fill="#e8533f" stroke="none"/></svg>
<svg class="abs" style="left:1862px;top:1011px" width="17" height="17" viewBox="0 0 20 20" fill="none" stroke="#222" stroke-width="2.200"><rect x="2" y="2" width="6" height="6" rx="1.200"/><rect x="12" y="2" width="6" height="6" rx="1.200"/><rect x="2" y="12" width="6" height="6" rx="1.200"/><rect x="12" y="12" width="6" height="6" rx="1.200"/></svg>
<svg class="abs" style="left:1888px;top:1008px" width="26" height="24" viewBox="0 0 26 24"><circle cx="13" cy="12" r="10" fill="#fdf3e6"/><path d="M5 10c2-4 10-5 15-2l-3 2.500c-2 3-7 4-10 2.500z" fill="#e8772a"/><path d="M7 12.500c3 1.500 8 .5 10-2l-2 5c-2 1-5 .5-8-3z" fill="#c9551b"/><circle cx="16.500" cy="9.500" r="1" fill="#3a1d0a"/></svg>
<!-- watermark -->
<span class="t" style="left:1724px;top:1046px;font-family:'Liberation Serif','DejaVu Serif',serif;font-size:21px;font-weight:bold;font-style:italic;color:#e01818;letter-spacing:1.050px">www.java1234.com</span>

<!--OVERLAYS-->
</body>
</html>
